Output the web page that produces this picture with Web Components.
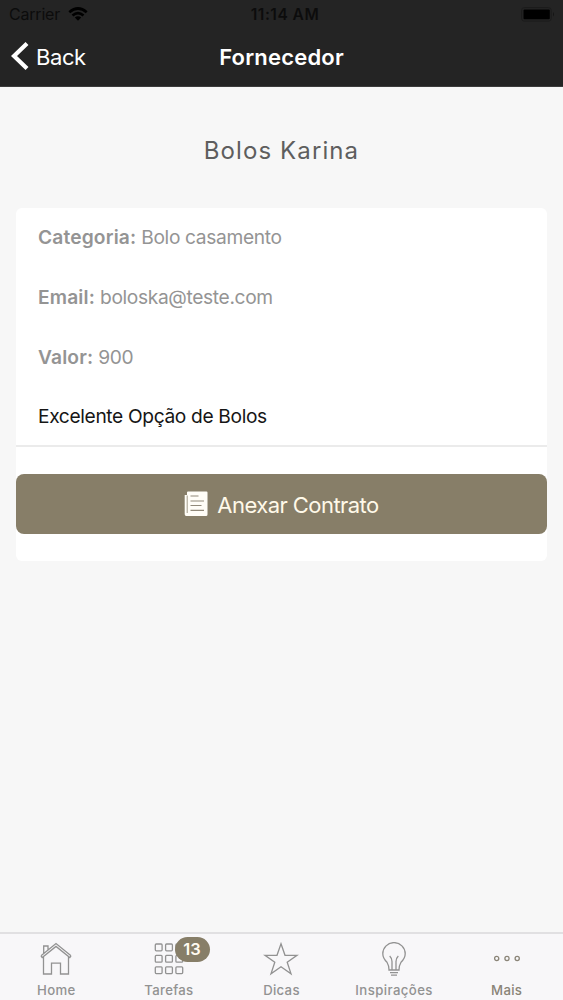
<!DOCTYPE html>
<html lang="pt-BR">
<head>
<meta charset="utf-8">
<title>Fornecedor</title>
<style>
html,body{margin:0;height:100%}
body{font-family:Inter,"Liberation Sans",sans-serif;background:#f7f7f7;overflow:hidden}
</style>
</head>
<body>
<app-screen></app-screen>
<script>
const define=(name,html)=>customElements.define(name,class extends HTMLElement{
  connectedCallback(){
    if(this.shadowRoot)return;
    const root=this.attachShadow({mode:'open'});
    const t=document.createElement('template');
    t.innerHTML=html;
    root.append(t.content.cloneNode(true));
  }
});

define('status-bar',`<style>
:host{display:grid;grid-template-columns:1fr auto 1fr;align-items:center;height:28px;padding:0 8px 0 9px;color:#0c0c0c;font-size:16px;line-height:28px}
.left{display:flex;align-items:center;gap:8px;letter-spacing:-.2px}
.time{font-weight:600;font-size:15.5px;letter-spacing:.5px;transform:translate(3px,1px)}
.bat{justify-self:end}
svg{display:block}
</style>
<div class="left"><span>Carrier</span><svg width="20" height="14" viewBox="0 0 20 14" fill="none" stroke="#000" stroke-width="2.7"><path d="M1.3 5.2Q10-2.2 18.7 5.2M4.5 8.6Q10 3.8 15.5 8.6"/><path d="M6.8 10.5Q10 8 13.2 10.5L10 13.8Z" fill="#000" stroke="none"/></svg></div>
<span class="time">11:14 AM</span>
<svg class="bat" width="34" height="15" viewBox="0 0 34 15"><rect x=".7" y=".7" width="29.5" height="13.4" rx="2.5" fill="none" stroke="#1b1b1b"/><rect x="2.5" y="2.5" width="26.3" height="9.8" rx="1" fill="#000"/><path d="M32 5v4.5q2-2.2 0-4.5" fill="#151515"/></svg>`);

define('nav-bar',`<style>
:host{display:grid;grid-template-columns:1fr auto 1fr;align-items:center;height:58px;color:#fff;font-size:22px;line-height:58px}
.back{display:flex;align-items:center;gap:7px;padding-left:11px;letter-spacing:-.4px}
.title{font-weight:600;letter-spacing:.2px}
svg{display:block;transform:translateY(-1px)}
</style>
<div class="back"><svg width="18" height="28" viewBox="0 0 18 28"><path d="M16 1.5L3 14l13 12.5" fill="none" stroke="#fff" stroke-width="4.2"/></svg><span>Back</span></div>
<div class="title"><slot></slot></div><span></span>`);

define('info-row',`<style>
:host{display:block;height:59.8px;line-height:59.8px;padding-left:22px;font-size:19.2px;letter-spacing:-.36px;color:var(--row-color,#949494);white-space:pre}
::slotted(b){font-weight:600;letter-spacing:.15px}
</style><slot></slot>`);

define('info-card',`<style>
:host{display:block;margin:0 16px;height:353px;background:#fff;border-radius:6px}
.rows{height:239px;border-bottom:2px solid #ebebeb;box-sizing:border-box}
.action{padding-top:27px}
</style><div class="rows"><slot></slot></div><div class="action"><slot name="action"></slot></div>`);

define('attach-button',`<style>
:host{display:flex;height:60px;align-items:center;justify-content:center;gap:9px;background:#877e68;border-radius:8px;color:#fff9e9;font-size:22px;letter-spacing:-.55px;line-height:60px}
svg{display:block}
span{transform:translateY(.5px)}
</style><svg width="24" height="26" viewBox="0 0 24 26"><path d="M3 1.5Q3 .5 4 .5H22.5Q23.5.5 23.5 1.5V23.5Q23.5 25 22 25H2.2Q.7 25 .7 23.3V4H3Z" fill="#fffdf7"/><path d="M3.2 4.5V22" stroke="#a19a89" stroke-width="1"/><path d="M6.5 5h8M6.5 10H20M6.5 14.5h11M6.5 19.3H20" stroke="#91897a" stroke-width="1.2"/></svg><span><slot></slot></span>`);

define('tab-item',`<style>
:host{display:flex;flex-direction:column;align-items:center;flex:1;position:relative;color:var(--tab-color,#929292)}
.icon{height:47px;display:flex;align-items:flex-start;padding-top:8px;box-sizing:border-box}
.label{font-size:13.2px;font-weight:500;line-height:18px;letter-spacing:var(--spacing,.3px)}
::slotted(svg){display:block;fill:none;stroke:currentColor;stroke-width:1.3}
</style><div class="icon"><slot name="icon"></slot></div><div class="label"><slot></slot></div><slot name="badge"></slot>`);

define('count-badge',`<style>
:host{position:absolute;left:62px;top:3px;width:35px;height:25px;border-radius:13px;background:#877e68;color:#fffaf0;font-size:16.5px;font-weight:600;line-height:25px;text-align:center}
</style><slot></slot>`);

define('tab-bar',`<style>
:host{display:flex;height:68px;box-sizing:border-box;border-top:2px solid #e1e0e2;background:#f8f7f9}
</style><slot></slot>`);

define('app-screen',`<style>
:host{display:flex;flex-direction:column;height:1000px;width:563px}
header{background:#242424;border-bottom:1px solid #3c3c3c;height:86px}
main{flex:1}
h1{margin:0;height:121px;line-height:128px;text-align:center;font-size:24px;font-weight:400;letter-spacing:1.1px;color:#5e5e5e}
</style>
<header><status-bar></status-bar><nav-bar>Fornecedor</nav-bar></header>
<main>
<h1>Bolos Karina</h1>
<info-card>
<info-row><b>Categoria:</b> Bolo casamento</info-row>
<info-row><b>Email:</b> boloska@teste.com</info-row>
<info-row><b>Valor:</b> 900</info-row>
<info-row style="--row-color:#161616">Excelente Opção de Bolos</info-row>
<attach-button slot="action">Anexar Contrato</attach-button>
</info-card>
</main>
<tab-bar>
<tab-item>Home<svg slot="icon" width="32" height="34" viewBox="0 0 32 34"><path d="M1 12.8L16 .5 31 12.8M1 12.8L2.2 14.6 16 3.4 29.8 14.6 31 12.8M3.5 13.8V31H11.5V20.2H20.5V31H28.5V13.8M3.7 10.4V3H8V6.8" transform="translate(0 1)"/></svg></tab-item>
<tab-item style="--spacing:.3px">Tarefas<svg slot="icon" width="30" height="34" viewBox="0 0 30 34"><rect x="1.3" y="2" width="6.8" height="6.8" rx="1"/><rect x="11.6" y="2" width="6.8" height="6.8" rx="1"/><rect x="21.9" y="2" width="6.8" height="6.8" rx="1"/><rect x="1.3" y="13.4" width="6.8" height="6.8" rx="1"/><rect x="11.6" y="13.4" width="6.8" height="6.8" rx="1"/><rect x="21.9" y="13.4" width="6.8" height="6.8" rx="1"/><rect x="1.3" y="24.8" width="6.8" height="6.8" rx="1"/><rect x="11.6" y="24.8" width="6.8" height="6.8" rx="1"/><rect x="21.9" y="24.8" width="6.8" height="6.8" rx="1"/></svg><count-badge slot="badge">13</count-badge></tab-item>
<tab-item>Dicas<svg slot="icon" width="36" height="34" viewBox="0 0 36 34"><path d="M18 1.8L22 13.3H34L24.2 20.3 28 31.8 18 24.8 8 31.8 11.8 20.3 2 13.3H14Z"/></svg></tab-item>
<tab-item style="--spacing:.4px">Inspirações<svg slot="icon" width="26" height="36" viewBox="0 0 26 36"><path d="M8 28Q8.1 24 6 20.3Q1.8 16.3 1.8 11.8A11.2 11.2 0 0 1 24.2 11.8Q24.2 16.3 20 20.3Q17.9 24 18 28ZM11 28V19.5Q10.8 16 8.7 14M15 28V19.5Q15.2 16 17.3 14M9 30.6h8M10 33.2h6"/></svg></tab-item>
<tab-item style="--tab-color:#8a8477">Mais<svg slot="icon" width="28" height="34" viewBox="0 0 28 34"><circle cx="3.7" cy="16.5" r="2.1"/><circle cx="14" cy="16.5" r="2.1"/><circle cx="24.2" cy="16.5" r="2.1"/></svg></tab-item>
</tab-bar>`);
</script>
</body>
</html>
